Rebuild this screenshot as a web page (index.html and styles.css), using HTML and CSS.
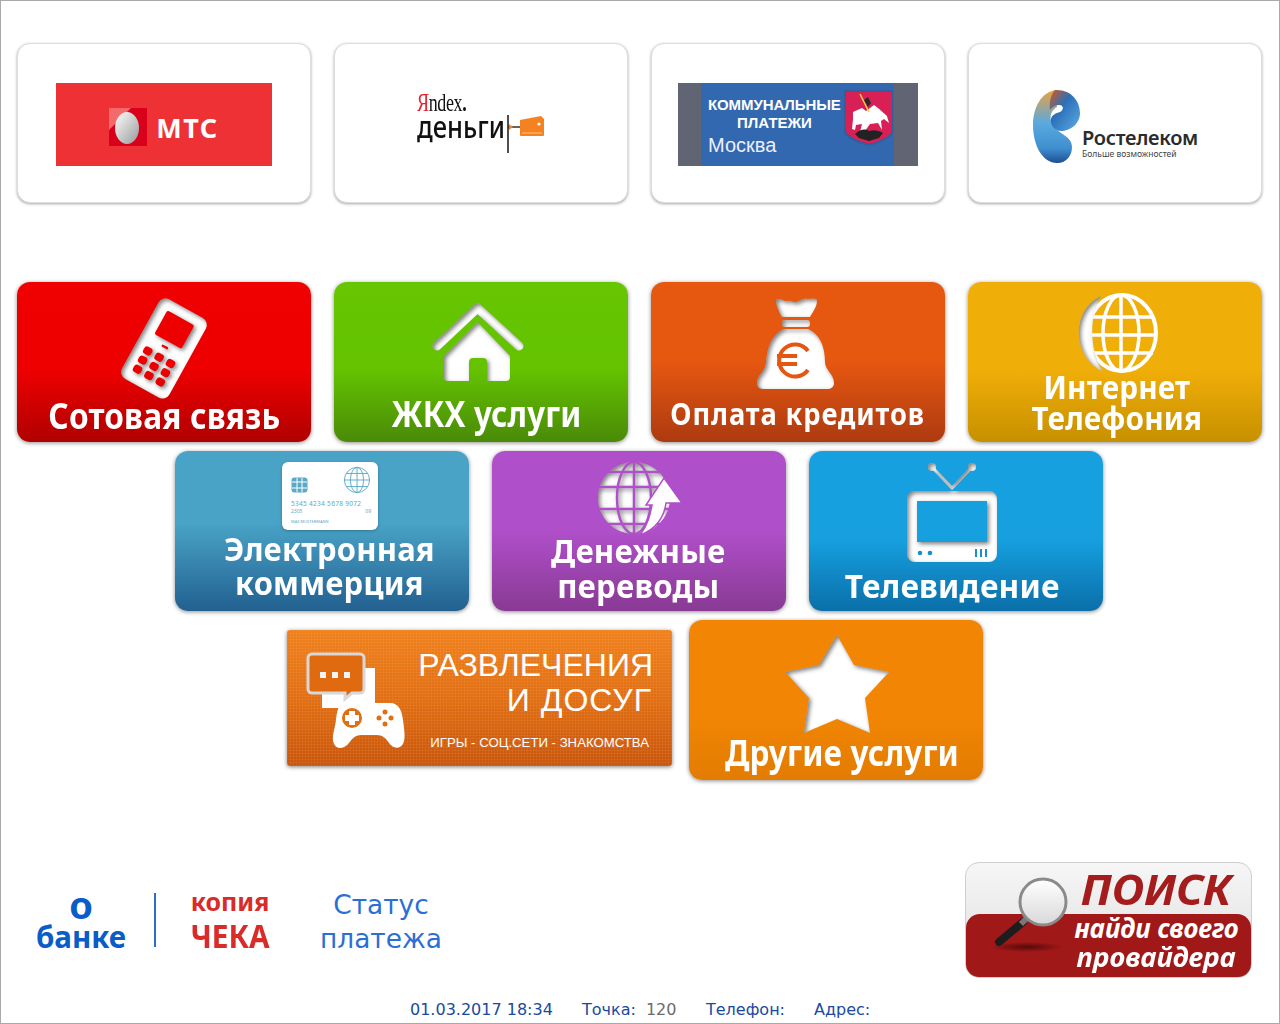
FILE: index.html
```html
<!DOCTYPE html>
<html lang="ru">
<head>
<meta charset="utf-8">
<title>Терминал оплаты</title>
<link rel="stylesheet" href="styles.css">
</head>
<body>
<svg class="defs" aria-hidden="true">
  <defs>
    <filter id="inset" x="-10%" y="-10%" width="120%" height="120%" color-interpolation-filters="sRGB">
      <feOffset in="SourceAlpha" dx="2" dy="2"/>
      <feGaussianBlur stdDeviation="2" result="b"/>
      <feComposite in="SourceAlpha" in2="b" operator="out" result="inner"/>
      <feFlood flood-color="#000" flood-opacity=".5"/>
      <feComposite in2="inner" operator="in" result="shade"/>
      <feMerge><feMergeNode in="SourceGraphic"/><feMergeNode in="shade"/></feMerge>
    </filter>
    <linearGradient id="egg" x1="0" y1="0" x2="1" y2="1"><stop offset="0" stop-color="#fff"/><stop offset="1" stop-color="#999"/></linearGradient>
    <linearGradient id="rtA" x1="0" y1="0" x2="0" y2="1"><stop offset="0" stop-color="#e9a33f"/><stop offset=".45" stop-color="#5aa9e0"/><stop offset=".8" stop-color="#3f8fd0"/><stop offset="1" stop-color="#1d4f92"/></linearGradient>
    <linearGradient id="rtB" x1="0" y1="0" x2="1" y2="1"><stop offset="0" stop-color="#d9581c"/><stop offset=".4" stop-color="#2b6fb8"/><stop offset="1" stop-color="#5cade2"/></linearGradient>
    <linearGradient id="lens" x1="0" y1="0" x2="0" y2="1"><stop offset="0" stop-color="#fff"/><stop offset="1" stop-color="#d8d8d8"/></linearGradient>
    <radialGradient id="shadow"><stop offset="0" stop-color="#4d0808" stop-opacity=".9"/><stop offset="1" stop-color="#4d0808" stop-opacity="0"/></radialGradient>
  </defs>
</svg>

<main class="page">
  <section class="row row-logos">
    <a class="card">
      <div class="mts">
        <svg class="mts-mark" viewBox="109 108 38 38">
          <path d="M109 108h38v38h-38z" fill="#d9001b"/>
          <path d="M109 108h22l-22 22z" fill="#f46a6a"/>
          <ellipse cx="127" cy="128" rx="12" ry="16" fill="url(#egg)"/>
        </svg>
        <span class="mts-text">МТС</span>
      </div>
    </a>
    <a class="card">
      <div class="yandex">
        <div class="yandex-words">
          <span class="yandex-top"><b>Я</b>ndex<i>.</i></span>
          <span class="yandex-bottom">деньги</span>
        </div>
        <svg class="yandex-wallet" viewBox="506 114 40 40">
          <path d="M508 115v38" stroke="#222" stroke-width="1.6"/>
          <path d="M508 127h12" stroke="#222" stroke-width="1.4"/>
          <path d="M509 124l4 3-4 3z" fill="#f58220"/>
          <path d="M520 120l21-4 3 3v16a1 1 0 0 1-1 1h-22a1 1 0 0 1-1-1z" fill="#f58220"/>
          <path d="M522 133h20" stroke="#fbc08a" stroke-width="1"/>
          <circle cx="539" cy="124" r="1.6" fill="#fff"/>
        </svg>
      </div>
    </a>
    <a class="card">
      <div class="komm">
        <div class="komm-blue">
          <div class="komm-words">
            <span class="komm-a">КОММУНАЛЬНЫЕ</span>
            <span class="komm-b">ПЛАТЕЖИ</span>
            <span class="komm-c">Москва</span>
          </div>
          <svg class="komm-shield" viewBox="844 88 50 60">
            <path d="M844 90h49v42q-2 8-24 14q-23-6-25-14z" fill="#2f5f9f"/>
            <path d="M846 92h46v39q-2 7-23 13q-21-6-23-13z" fill="#d81f56"/>
            <path d="M853 112l9-4 4 3 8-6 4 3 9 8 2 7-5-4-3 2 1 9-4-7-8 1-5 7-5 1 2-8-6 1-1 5-3-1 1-10z" fill="#fff"/>
            <path d="M860 94l9 18" stroke="#ffd23a" stroke-width="1.6"/>
            <path d="M864 100l4-3 3 6-3 4z" fill="#2a2a2a"/>
            <path d="M855 134q8-7 14-3q8-2 14 2l-4 5-10 3-10-3z" fill="#222"/>
          </svg>
        </div>
      </div>
    </a>
    <a class="card">
      <div class="rt">
        <svg class="rt-mark" viewBox="1031 89 50 75">
          <path d="M1055 90C1040 92 1032 108 1032 125C1032 146 1042 163 1056 163C1066 163 1071 155 1071 147C1071 138 1062 135 1056 130C1048 123 1047 112 1056 107Z" fill="url(#rtA)"/>
          <path d="M1054 90C1070 89 1079 101 1079 113C1079 124 1069 131 1060 131C1053 131 1049 124 1050 119C1051 115 1055 113 1059 112C1063 110 1063 105 1058 105C1054 105 1051 107 1049 110C1048 102 1050 94 1054 90Z" fill="url(#rtB)"/>
        </svg>
        <div class="rt-words">
          <span class="rt-name">Ростелеком</span>
          <span class="rt-sub">Больше возможностей</span>
        </div>
      </div>
    </a>
  </section>

  <section class="row row-one">
    <a class="tile red">
      <svg class="icon icon-phone" viewBox="118 295 90 105">
        <mask id="mPhone" maskUnits="userSpaceOnUse" x="100" y="280" width="130" height="130">
          <rect x="100" y="280" width="130" height="130" fill="#fff"/>
          <g transform="translate(163 347.5) rotate(29)" fill="#000">
            <rect x="-15.5" y="-35" width="31" height="27" rx="2"/>
            <rect x="-3.500" y="-3" width="7" height="2.500" rx="1"/>
            <rect x="-17.500" y="6" width="9" height="8" rx="3"/><rect x="-4.500" y="6" width="9" height="8" rx="3"/><rect x="8.500" y="6" width="9" height="8" rx="3"/>
            <rect x="-17.500" y="16.500" width="9" height="8" rx="3"/><rect x="-4.500" y="16.500" width="9" height="8" rx="3"/><rect x="8.500" y="16.500" width="9" height="8" rx="3"/>
            <rect x="-17.500" y="27" width="9" height="8" rx="3"/><rect x="-4.500" y="27" width="9" height="8" rx="3"/><rect x="8.500" y="27" width="9" height="8" rx="3"/>
          </g>
        </mask>
        <g filter="url(#inset)"><g mask="url(#mPhone)">
          <rect x="136" y="302" width="54" height="91" rx="8" transform="rotate(29 163 347.500)" fill="#fff"/>
        </g></g>
      </svg>
      <span class="label l-cell">Сотовая связь</span>
    </a>
    <a class="tile green">
      <svg class="icon icon-house" viewBox="430 300 96 82">
        <g filter="url(#inset)">
          <path d="M437 345L477.500 307L519 345" fill="none" stroke="#fff" stroke-width="9" stroke-linecap="round" stroke-linejoin="round"/>
          <path d="M477.500 321L510 355V376a4 4 0 0 1-4 4H487V361a4 4 0 0 0-4-4H473a4 4 0 0 0-4 4V380H448a4 4 0 0 1-4-4V355Z" fill="#fff"/>
        </g>
      </svg>
      <span class="label l-home">ЖКХ услуги</span>
    </a>
    <a class="tile rust">
      <svg class="icon icon-bag" viewBox="756 296 81 95">
        <g filter="url(#inset)">
          <path d="M777 300c3-3 8 2 11 1c4-1 6 2 9 1c4-1 8-5 12-3c6 0 9-1 9 2c0 5-4 11-7 16h-28c-3-5-6-12-6-17z" fill="#fff"/>
          <rect x="783" y="320" width="28" height="7" rx="3" fill="#fff"/>
          <path fill-rule="evenodd" d="M785 329h24c12 5 17 18 17 33c0 8 9 12 9 21c0 4-3 6-7 6h-64c-4 0-6-3-6-6c0-8 8-11 9-20c1-16 6-29 18-34z" fill="#fff"/>
        </g>
        <path d="M809 351a16 16 0 1 0 0 19M778 356h20M778 364h20" fill="none" stroke="#e65610" stroke-width="4"/>
      </svg>
      <span class="label l-credit">Оплата кредитов</span>
    </a>
    <a class="tile amber">
      <svg class="icon icon-globe" viewBox="1077 292 83 83">
        <g fill="none" stroke="#fff">
          <ellipse cx="1123" cy="333" rx="34" ry="38" stroke-width="4"/>
          <ellipse cx="1122" cy="333" rx="18" ry="38" stroke-width="3.500"/>
          <path d="M1122 295v76M1092 317h62M1088 335h70M1092 353h62" stroke-width="3.500"/>
        </g>
        <path filter="url(#inset)" d="M1102 296C1072 310 1072 356 1104 372C1090 350 1090 316 1102 296Z" fill="#fff"/>
      </svg>
      <span class="label l-net">Интернет<br>Телефония</span>
    </a>
  </section>

  <section class="row row-two">
    <a class="tile teal">
      <div class="cc">
        <div class="cc-top">
          <svg class="cc-chip" viewBox="0 0 17 16"><rect x=".5" y=".5" width="16" height="15" rx="3" fill="#5aa9c9"/><path d="M1 5h15M1 11h15M6 1v14M11 1v14" stroke="#fff" stroke-width="1"/></svg>
          <svg class="cc-globe" viewBox="0 0 30 30"><g fill="none" stroke="#5aa9c9" stroke-width="1"><circle cx="15" cy="15" r="13.500"/><ellipse cx="15" cy="15" rx="7" ry="13.500"/><path d="M15 1.500v27M1.500 15h27M3.500 8h23M3.500 22h23"/></g></svg>
        </div>
        <span class="cc-num">5345 4234 5678 9072</span>
        <div class="cc-meta"><span>2305</span><span>09</span></div>
        <span class="cc-name">MAX MUSTERMANN</span>
      </div>
      <span class="label l-shop">Электронная<br>коммерция</span>
    </a>
    <a class="tile purple">
      <svg class="icon icon-transfer" viewBox="596 460 90 76">
        <mask id="mGlobe" maskUnits="userSpaceOnUse" x="590" y="455" width="100" height="85">
          <rect x="590" y="455" width="100" height="85" fill="#fff"/>
          <g fill="none" stroke="#000" stroke-width="2.500">
            <ellipse cx="634" cy="498" rx="17" ry="36"/>
            <path d="M634 460v76M596 487h76M596 509h76M604 472h60M604 524h60"/>
          </g>
        </mask>
        <g filter="url(#inset)">
          <g mask="url(#mGlobe)"><circle cx="634" cy="498" r="36" fill="#fff"/></g>
        </g>
        <path d="M640 535C655 530 664 518 666 503H682L664 478L646 505H652C650 515 648 525 640 535Z" fill="#fff" stroke="#b04fc9" stroke-width="1.500"/>
      </svg>
      <span class="label l-money">Денежные<br>переводы</span>
    </a>
    <a class="tile sky">
      <svg class="icon icon-tv" viewBox="905 461 94 103">
        <g filter="url(#inset)">
          <path d="M932 467L952 488L972 467" fill="none" stroke="#fff" stroke-width="3"/>
          <circle cx="932" cy="467" r="4" fill="#fff"/><circle cx="972" cy="467" r="4" fill="#fff"/>
          <path fill-rule="evenodd" d="M915 491h74a8 8 0 0 1 8 8v55a8 8 0 0 1-8 8h-74a8 8 0 0 1-8-8v-55a8 8 0 0 1 8-8zM917 501v41h70v-41z" fill="#fff"/>
        </g>
        <g fill="#1a8fcc"><circle cx="920" cy="553" r="2.300"/><circle cx="930" cy="553" r="2.300"/><path d="M975 549h2v8h-2zM980 549h2v8h-2zM985 549h2v8h-2z"/></g>
      </svg>
      <span class="label l-tv">Телевидение</span>
    </a>
  </section>

  <section class="row row-three">
    <a class="banner">
      <svg class="banner-icon" viewBox="304 650 103 100">
        <path d="M322 668h53v40h-28l-6 6v-6h-19z" fill="#fff"/>
        <path d="M312 654h48a4 4 0 0 1 4 4v31a4 4 0 0 1-4 4h-8l-7 6v-6h-33a4 4 0 0 1-4-4v-31a4 4 0 0 1 4-4z" fill="#df6a10" stroke="#d8d8d8" stroke-width="3"/>
        <path d="M320 672h6v6h-6zM332 672h6v6h-6zM344 672h6v6h-6z" fill="#f4f4f4"/>
        <path d="M346 703h44c9 0 12 8 13 17c1 9 3 18 0 24c-3 5-10 5-14-1c-3-5-7-8-12-8h-16c-6 0-9 4-12 8c-5 6-12 7-15 1c-3-7 1-15 2-24c1-9 2-17 10-17z" fill="#fff"/>
        <circle cx="352" cy="718" r="10" fill="#e06f12"/>
        <path d="M349 711h6v4h4v6h-4v4h-6v-4h-4v-6h4z" fill="#fff"/>
        <g fill="#e06f12"><circle cx="385" cy="712" r="2.500"/><circle cx="385" cy="724" r="2.500"/><circle cx="379" cy="718" r="2.500"/><circle cx="391" cy="718" r="2.500"/></g>
      </svg>
      <div class="banner-text">
        <span class="banner-title">РАЗВЛЕЧЕНИЯ</span>
        <span class="banner-title2">И ДОСУГ</span>
        <span class="banner-sub">ИГРЫ - СОЦ.СЕТИ - ЗНАКОМСТВА</span>
      </div>
    </a>
    <a class="tile tangerine">
      <svg class="icon icon-star" viewBox="783 633 108 102">
        <path filter="url(#inset)" d="M837 635L854 665L889 672L865 698L870 733L837 719L804 733L809 698L785 672L819 665Z" fill="#fff"/>
      </svg>
      <span class="label l-other">Другие услуги</span>
    </a>
  </section>

  <section class="footer">
    <nav class="links">
      <a class="about"><span class="about-o">о</span><span>банке</span></a>
      <span class="divider"></span>
      <a class="receipt"><span class="receipt-a">копия</span><span class="receipt-b">ЧЕКА</span></a>
      <a class="status">Статус<br>платежа</a>
    </nav>
    <a class="search">
      <div class="search-top"><span class="search-title">ПОИСК</span></div>
      <div class="search-bottom"><span class="search-a">найди своего</span><span class="search-b">провайдера</span></div>
      <svg class="search-glass" viewBox="0 0 90 84">
        <ellipse cx="37" cy="77" rx="36" ry="5" fill="url(#shadow)"/>
        <path d="M33 52L9 72" stroke="#1d1d1d" stroke-width="8" stroke-linecap="round"/>
        <path d="M38 47L31 54" stroke="#777" stroke-width="6"/>
        <circle cx="53" cy="32" r="23" fill="url(#lens)" stroke="#8a8a8a" stroke-width="3"/>
      </svg>
    </a>
  </section>

  <footer class="statusbar">
    <span class="stamp">01.03.2017 18:34</span>
    <span class="point">Точка:<em>120</em></span>
    <span class="phone">Телефон:</span>
    <span class="address">Адрес:</span>
  </footer>
</main>
</body>
</html>
```
FILE: styles.css
```css
* { box-sizing: border-box; }
html, body { margin: 0; padding: 0; background: #fff; }
body { font-family: "Noto Sans", sans-serif; }
.defs { position: absolute; width: 0; height: 0; }
.page {
  width: 1280px; height: 1024px; border: 1px solid #aaa;
  padding-top: 42px; overflow: hidden;
}
.row { display: flex; align-items: flex-start; height: 160px; }
.row-logos { padding-left: 16px; gap: 23px; margin-bottom: 79px; }
.row-one { padding-left: 16px; gap: 23px; margin-bottom: 9px; }
.row-two { padding-left: 174px; gap: 23px; margin-bottom: 9px; }
.row-three { padding-left: 286px; gap: 17px; }

.card {
  width: 294px; height: 160px; border-radius: 13px; background: #fff;
  border: 1px solid #ddd; box-shadow: 0 1px 3px rgba(0,0,0,.35);
  display: flex; align-items: center; justify-content: center;
}
.tile {
  width: 294px; height: 160px; border-radius: 13px;
  box-shadow: 0 1px 4px rgba(0,0,0,.45);
  display: flex; flex-direction: column; align-items: center;
  color: #fff;
}
.red { background: linear-gradient(#f00000 0, #ee0000 55%, #b00000 100%); padding-top: 14px; }
.green { background: linear-gradient(#66c600 0, #64c200 55%, #4a8a08 100%); padding-top: 19px; }
.rust { background: linear-gradient(#e65710 0, #e65710 50%, #ad3a10 100%); padding-top: 14px; }
.amber { background: linear-gradient(#f0ae08 0, #f0ae08 55%, #c79000 100%); padding-top: 10px; }
.teal { background: linear-gradient(#49a3c7 0, #49a3c7 45%, #226090 100%); padding-top: 11px; }
.purple { background: linear-gradient(#b04fca 0, #b04fca 50%, #883a93 100%); padding-top: 9px; }
.sky { background: linear-gradient(#16a0e0 0, #16a0e0 55%, #0a6fa8 100%); padding-top: 10px; }
.tangerine { background: linear-gradient(#f28503 0, #f28503 60%, #e27c02 100%); padding-top: 13px; }

.icon { display: block; flex: none; }
.icon-phone { width: 90px; height: 105px; }
.icon-house { width: 96px; height: 82px; margin-right: 6px; }
.icon-bag { width: 81px; height: 95px; margin-right: 5px; }
.icon-globe { width: 83px; height: 83px; margin-left: 4px; }
.icon-transfer { width: 90px; height: 76px; margin-left: 3px; }
.icon-tv { width: 94px; height: 103px; margin-right: 8px; }
.icon-star { width: 108px; height: 102px; margin-left: 2px; }

.label {
  display: inline-block; font-weight: 700; font-size: 35px; line-height: 34px;
  text-align: center; white-space: nowrap; letter-spacing: .2px;
}
.l-cell { transform: scaleX(.904); margin-top: -2px; }
.l-home { transform: scaleX(.893); margin: 14px 0 0 10px; }
.l-credit { font-size: 31px; letter-spacing: 1px; transform: scaleX(.88); margin-top: 5px; }
.l-net { font-size: 33px; line-height: 31px; transform: scaleX(.9); margin: -4px 0 0 4px; }
.l-shop { font-size: 33px; transform: scaleX(.938); margin: 2px 0 0 15px; }
.l-money { font-size: 33px; line-height: 35px; transform: scaleX(.945); margin: -3px 0 0 -2px; }
.l-tv { font-size: 33px; transform: scaleX(.957); margin: 5px 7px 0 0; }
.l-other { transform: scaleX(.9); margin: 1px 0 0 12px; }

/* logo cards */
.mts {
  width: 216px; height: 83px; background: #ee3135; margin-top: 2px;
  padding-top: 6px;
  display: flex; align-items: center; justify-content: center; gap: 9px;
}
.mts-mark { width: 38px; height: 38px; display: block; }
.mts-text { color: #fff; font: 700 27px "Noto Sans", sans-serif; letter-spacing: 1.500px; }

.yandex { display: flex; align-items: flex-start; }
.yandex-words { display: flex; flex-direction: column; align-items: flex-start; width: 89px; }
.yandex-top { font: 25px/20px "Liberation Serif", serif; color: #111; transform: scaleX(.72); transform-origin: left; letter-spacing: -.5px; }
.yandex-top b { color: #e8212b; font-weight: 400; }
.yandex-top i { font-style: normal; font-weight: 700; }
.yandex-bottom { font: 500 30px/28px "Noto Sans", sans-serif; color: #111; transform: scaleX(.85); transform-origin: left; }
.yandex-wallet { width: 40px; height: 40px; margin-top: 21px; display: block; }

.komm { width: 240px; height: 83px; background: #616472; padding: 0 24px 0 23px; margin-top: 2px; }
.komm-blue { height: 83px; background: #3268b0; display: flex; justify-content: space-between; }
.komm-words { display: flex; flex-direction: column; padding: 13px 0 0 7px; color: #fff; }
.komm-a { font: 700 15px/18px "Liberation Sans", sans-serif; letter-spacing: -.1px; }
.komm-b { font: 700 15px/17px "Liberation Sans", sans-serif; margin-left: 29px; }
.komm-c { font: 20px/28px "Liberation Sans", sans-serif; color: #eef; }
.komm-shield { width: 50px; height: 60px; margin-top: 5px; display: block; }

.rt { display: flex; align-items: flex-start; margin-top: 7px; }
.rt-mark { width: 50px; height: 75px; display: block; }
.rt-words { display: flex; flex-direction: column; margin-top: 36px; }
.rt-name { font: 600 20px/26px "Noto Sans", sans-serif; color: #2b2b2b; letter-spacing: -.3px; }
.rt-sub { font: 8.500px/9px "Noto Sans", sans-serif; color: #444; margin-top: -2px; }

/* credit card */
.cc {
  width: 96px; height: 68px; background: #fff; border-radius: 6px; padding: 5px 7px 0 9px;
  color: #5aa9c9; display: flex; flex-direction: column; margin-left: 16px;
  box-shadow: 0 1px 3px rgba(0,0,0,.25); font-family: "Noto Sans", sans-serif;
}
.cc-top { display: flex; justify-content: space-between; align-items: center; height: 30px; margin-right: 4px; }
.cc-chip { width: 17px; height: 16px; margin-top: 6px; }
.cc-globe { width: 28px; height: 28px; margin-top: -4px; margin-right: -4px; }
.cc-num { font-size: 6.500px; line-height: 8px; white-space: nowrap; margin-top: 3px; letter-spacing: .3px; }
.cc-meta { display: flex; justify-content: space-between; font-size: 5px; line-height: 7px; }
.cc-name { font-size: 4px; line-height: 6px; margin-top: 4px; white-space: nowrap; }

/* games banner */
.banner {
  width: 385px; height: 136px; margin-top: 10px; border-radius: 3px; color: #fff;
  background:
    repeating-linear-gradient(90deg, rgba(255,255,255,.06) 0 1px, transparent 1px 3px),
    repeating-linear-gradient(0deg, rgba(255,255,255,.06) 0 1px, transparent 1px 3px),
    linear-gradient(#f0801a, #e06c10 55%, #c9550a);
  box-shadow: 0 1px 4px rgba(0,0,0,.5);
  display: flex; padding: 20px 19px 0 17px; justify-content: space-between;
}
.banner-icon { width: 103px; height: 100px; display: block; }
.banner-text { display: flex; flex-direction: column; align-items: flex-end; }
.banner-title { font: 32px/35px "Liberation Sans", sans-serif; margin-top: -2px; }
.banner-title2 { font: 32px/35px "Liberation Sans", sans-serif; letter-spacing: 1px; margin-right: 1px; }
.banner-sub { font: 13.200px/16px "Liberation Sans", sans-serif; margin: 17px 4px 0 0; white-space: nowrap; }

/* footer */
.footer { display: flex; justify-content: space-between; align-items: flex-start; margin-top: 82px; height: 116px; padding: 0 27px 0 29px; }
.links { display: flex; align-items: flex-start; padding-top: 25px; }
.about { width: 102px; display: flex; flex-direction: column; align-items: center; color: #0a5cc8; font-weight: 700; font-size: 29.500px; line-height: 30px; }
.about-o { font-size: 38px; line-height: 35px; }
.divider { width: 2px; height: 54px; background: #2a70c8; margin: 6px 0 0 22px; }
.receipt { width: 80px; margin-left: 34px; display: flex; flex-direction: column; align-items: center; color: #d92b27; font-weight: 700; }
.receipt-a { font-size: 25px; line-height: 28px; }
.receipt-b { font-size: 33px; line-height: 42px; transform: scaleX(.9); }
.status { width: 130px; margin: 1px 0 0 46px; text-align: center; color: #2a6fd6; font: 26.400px/34px "DejaVu Sans", sans-serif; }

.search {
  position: relative; width: 287px; height: 116px; border-radius: 14px; overflow: hidden;
  border: 1px solid #cfcfcf;
  background: linear-gradient(#f6f6f6, #dddddd); display: flex; flex-direction: column;
}
.search-top { height: 51px; display: flex; justify-content: flex-end; padding-right: 20px; }
.search-title { color: #a51c1c; font: italic 700 42px/51px "Noto Sans", sans-serif; transform: scaleX(1.08); transform-origin: right; }
.search-bottom {
  flex: 1; background: #a01818; border-radius: 14px 14px 0 0; color: #fff;
  display: flex; flex-direction: column; align-items: center; padding-left: 96px;
  font: italic 700 26px/28.500px "Noto Sans", sans-serif;
}
.search-b { transform: scaleX(1.06); }
.search-glass { position: absolute; left: 24px; top: 7px; width: 90px; height: 84px; overflow: visible; }

.statusbar {
  display: flex; font: 16px/20px "DejaVu Sans", sans-serif; color: #1a4a9e;
  padding-left: 409px; margin-top: 22px;
}
.stamp { width: 172px; }
.point { width: 124px; }
.point em { font-style: normal; color: #6b6b6b; margin-left: 10px; }
.phone { width: 108px; }
```
